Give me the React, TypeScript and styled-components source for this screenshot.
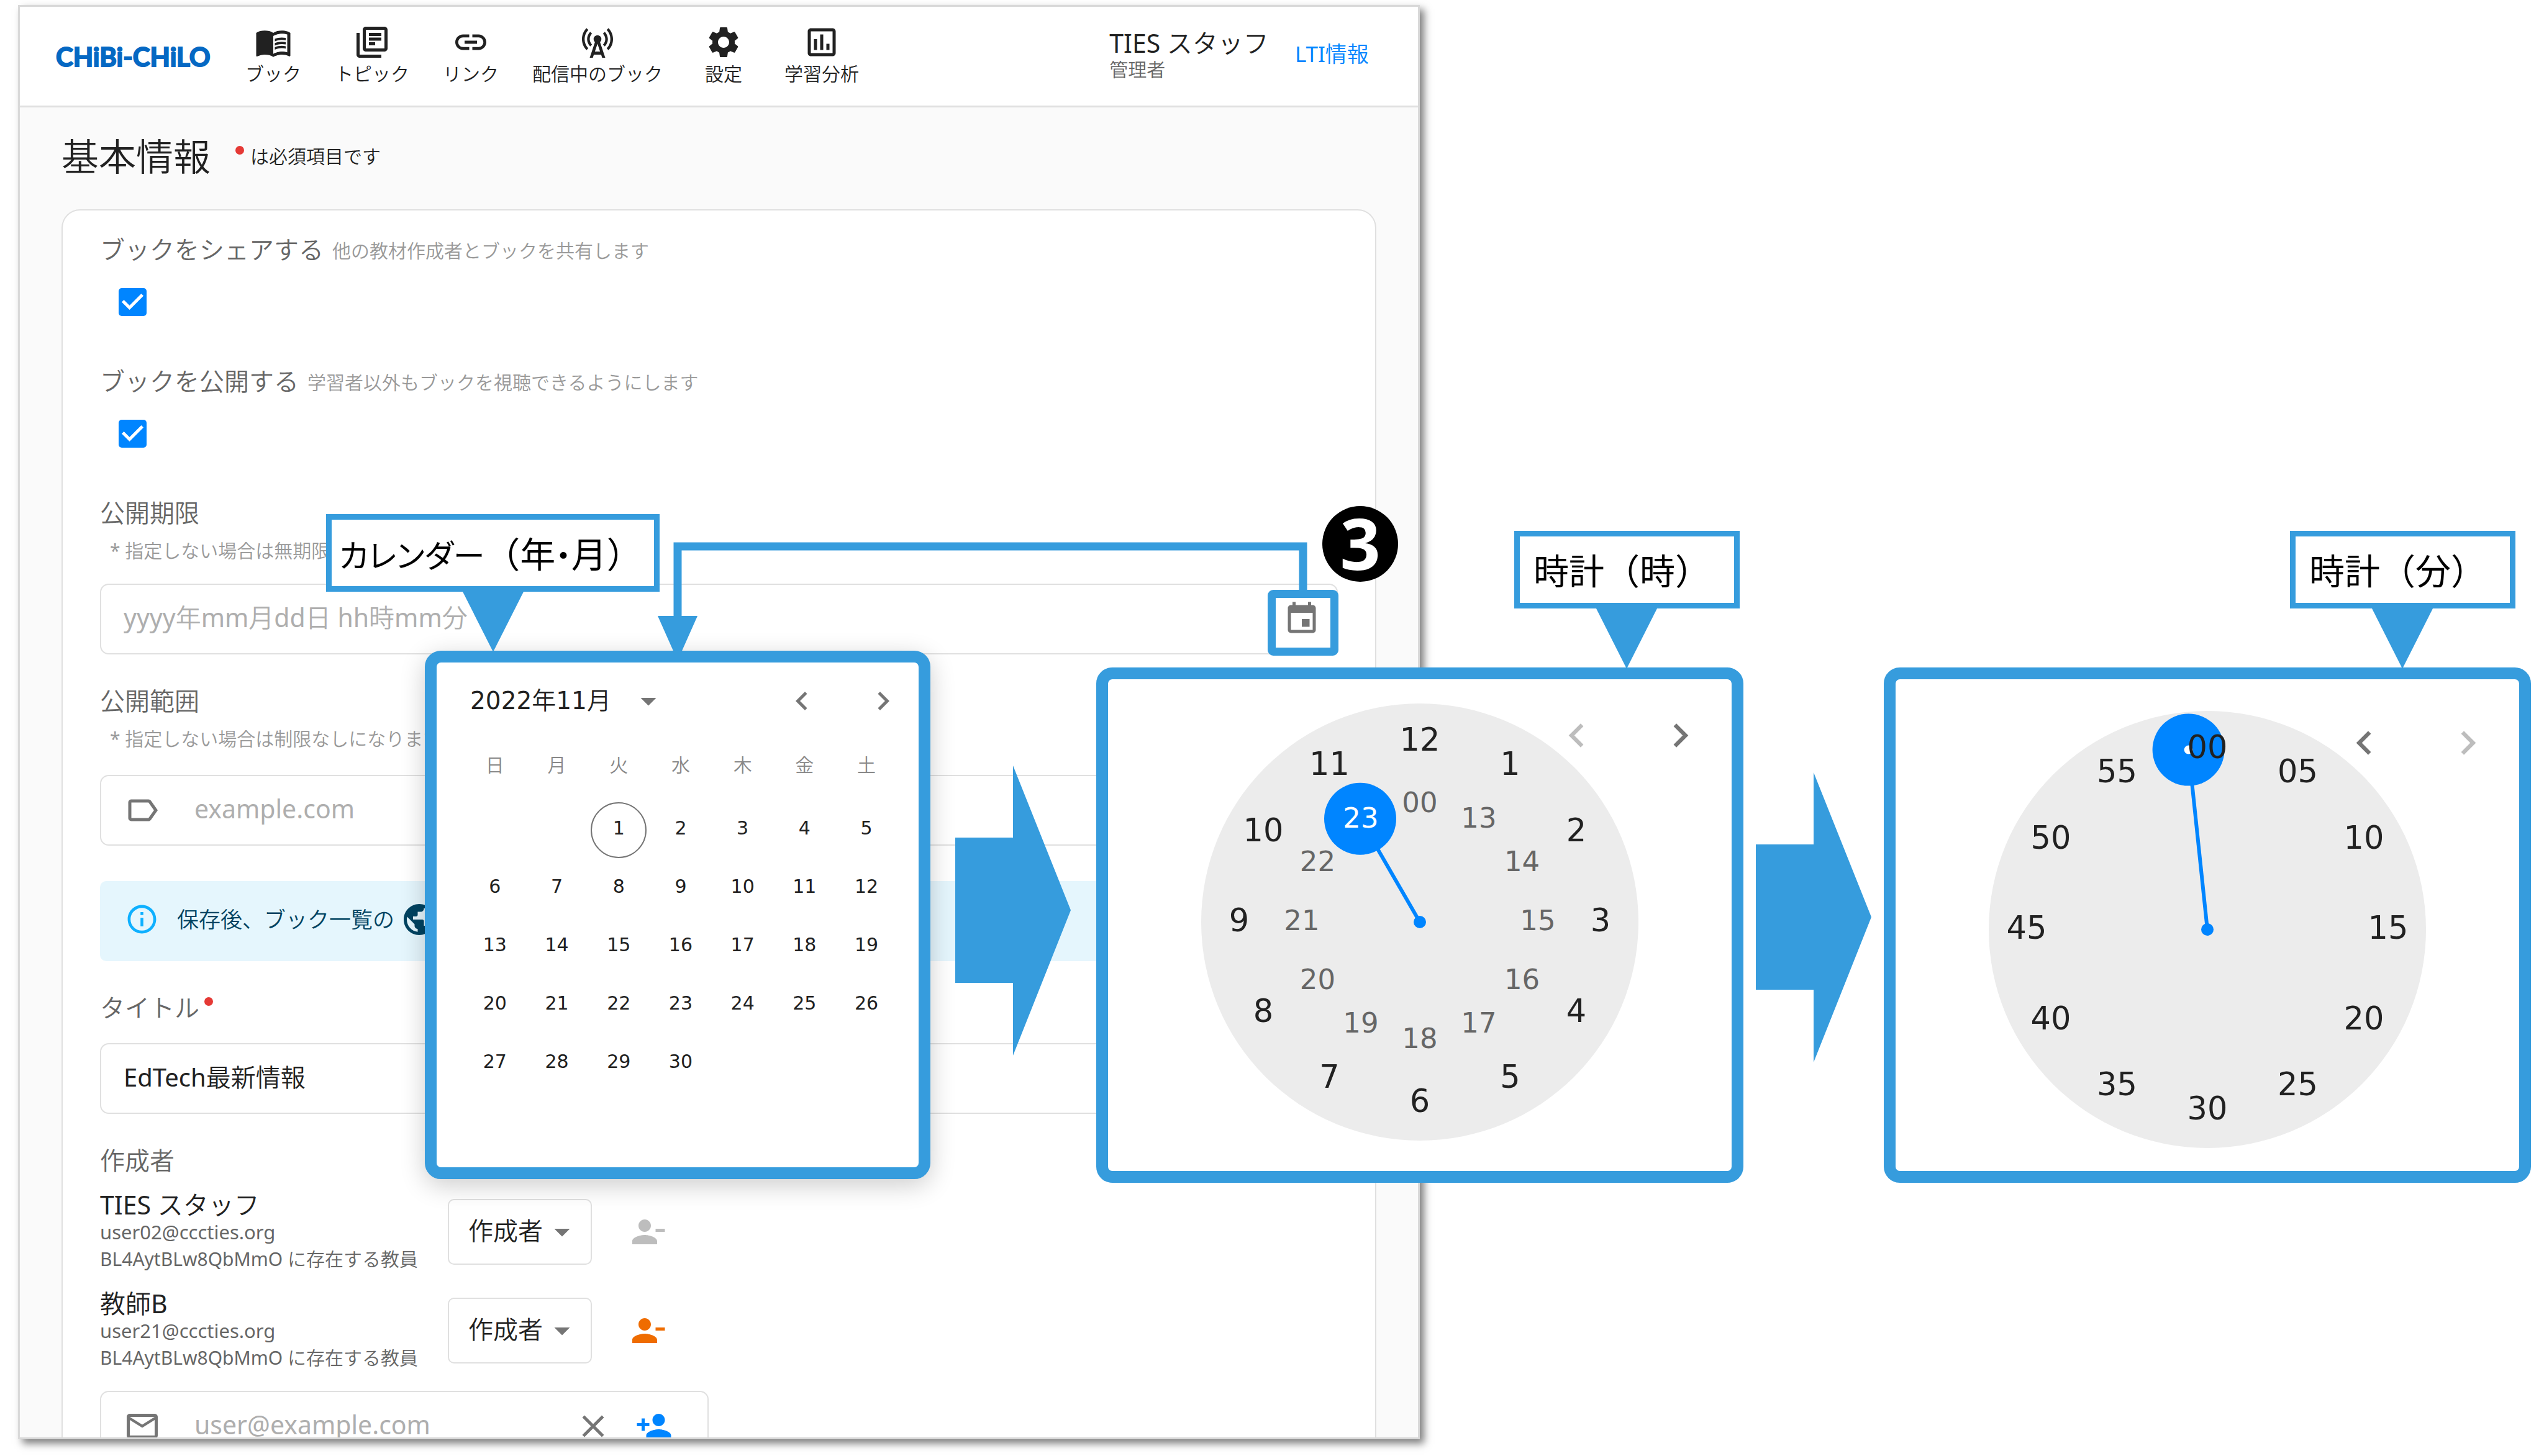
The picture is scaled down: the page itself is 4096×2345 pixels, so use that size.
import React from "react";
import styled, { createGlobalStyle, css } from "styled-components";
import {
  MdArrowDropDown,
  MdCellTower,
  MdChevronLeft,
  MdChevronRight,
  MdClose,
  MdEvent,
  MdInfoOutline,
  MdLabelOutline,
  MdLink,
  MdMailOutline,
  MdMenuBook,
  MdOutlineAssessment,
  MdOutlineLibraryBooks,
  MdPersonAdd,
  MdPersonRemove,
  MdPublic,
  MdSettings,
} from "react-icons/md";

const color = {
  annotation: "#369cdd",
  primary: "#0085ff",
  text: "#212121",
  muted: "#666666",
  faint: "#999999",
  placeholder: "#aeaeae",
  line: "#e0e0e0",
  icon: "#757575",
  danger: "#e53935",
};

const digits = `"DejaVu Sans", sans-serif`;

const GlobalStyle = createGlobalStyle`
  *, *::before, *::after { box-sizing: border-box; }
  body {
    margin: 0;
    background: #fff;
    color: ${color.text};
    font-family: "Noto Sans", "Noto Sans CJK JP DemiLight", "Noto Sans CJK JP", sans-serif;
    font-size: 40px;
    line-height: 60px;
  }
  button, input, select { font: inherit; color: inherit; margin: 0; padding: 0; border: 0; background: none; }
  h1, p { margin: 0; font-weight: inherit; }
  svg { display: block; flex: none; }
`;

const Stage = styled.main`
  position: relative;
  height: 100vh;
  padding: 8px 0 27px 29px;
  overflow: hidden;
`;

/* ---------- application window ---------- */

const Window = styled.section`
  width: calc(55% + 20px);
  height: 100%;
  overflow: hidden;
  border: 3px solid #d9d9d9;
  background: #fafafa;
  box-shadow: 7px 7px 12px rgba(0, 0, 0, 0.5);
`;

const Header = styled.header`
  display: flex;
  align-items: center;
  height: 162px;
  padding: 0 79px 4px 58px;
  border-bottom: 3px solid ${color.line};
  background: #fff;
`;

const Logo = styled.a`
  width: 305px;
  padding-top: 4px;
  color: #0568c3;
  font-family: Lato, sans-serif;
  font-size: 42px;
  font-weight: 700;
  text-decoration: none;
  white-space: nowrap;
  -webkit-text-stroke: 2px #0568c3;
`;

const Nav = styled.nav`
  display: flex;
  gap: 54px;
`;

const NavItem = styled.a`
  display: flex;
  flex-direction: column;
  align-items: center;
  min-width: 88px;
  color: inherit;
  font-size: 30px;
  line-height: 42px;
  text-decoration: none;
  white-space: nowrap;
`;

const Account = styled.div`
  display: flex;
  align-items: center;
  gap: 42px;
  margin-left: auto;
  padding-bottom: 4px;
  white-space: nowrap;
`;

const AccountName = styled.div`
  font-size: 41px;
  line-height: 50px;
`;

const AccountRole = styled.div`
  color: ${color.muted};
  font-size: 30px;
  line-height: 36px;
`;

const LtiLink = styled.a`
  color: ${color.primary};
  font-size: 35px;
  text-decoration: none;
`;

const Body = styled.div`
  padding: 37px 67px 0 67px;
`;

const Heading = styled.div`
  display: flex;
  align-items: center;
  gap: 40px;
  margin-bottom: 43px;
  line-height: 84px;
`;

const Title = styled.h1`
  font-size: 60px;
  font-weight: 300;
`;

const RequiredNote = styled.p`
  display: flex;
  align-items: center;
  gap: 10px;
  font-size: 30px;
`;

const RequiredDot = styled.span`
  width: 14px;
  height: 14px;
  margin-bottom: 20px;
  border-radius: 50%;
  background: ${color.danger};
`;

const Card = styled.form`
  padding: 33px 60px 120px;
  border: 2px solid ${color.line};
  border-radius: 30px;
  background: #fff;
`;

const Field = styled.div<{ $after?: number }>`
  margin-bottom: ${(p) => p.$after ?? 45}px;
`;

const Label = styled.label<{ $gap?: number }>`
  display: flex;
  align-items: center;
  gap: ${(p) => p.$gap ?? 14}px;
  width: fit-content;
  height: 60px;
  color: ${color.muted};
  white-space: nowrap;
`;

const Hint = styled.span`
  padding-top: 4px;
  color: ${color.faint};
  font-size: 30px;
`;

const HelpText = styled.p`
  margin-top: 9px;
  padding-left: 16px;
  color: ${color.faint};
  font-size: 30px;
  line-height: 44px;
  white-space: nowrap;
`;

const CheckBox = styled.input`
  display: block;
  appearance: none;
  width: 45px;
  height: 45px;
  margin: 32px 0 0 30px;
  border-radius: 5px;
  background: ${color.primary};

  &::after {
    content: "";
    display: block;
    height: 100%;
    background: #fff;
    clip-path: polygon(39% 78%, 11% 50%, 19% 42%, 39% 62%, 81% 20%, 89% 28%);
  }
`;

const InputBox = styled.div<{ $gap: number; $width?: string }>`
  display: flex;
  align-items: center;
  width: ${(p) => p.$width ?? "100%"};
  height: 114px;
  margin-top: ${(p) => p.$gap}px;
  padding: 0 26px 0 36px;
  border: 2px solid ${color.line};
  border-radius: 14px;
  background: #fff;
  color: ${color.icon};
`;

const TextInput = styled.input<{ $indent?: boolean }>`
  flex: 1;
  min-width: 0;
  margin-left: ${(p) => (p.$indent ? 54 : 0)}px;
  padding-bottom: 4px;
  color: ${color.text};
  outline: none;

  &::placeholder {
    color: ${color.placeholder};
    font-size: 41px;
    opacity: 1;
  }
`;

const IconButton = styled.button<{ $color?: string }>`
  display: flex;
  flex: none;
  color: ${(p) => p.$color ?? color.icon};
`;

const Notice = styled.div`
  display: flex;
  align-items: center;
  height: 129px;
  margin-bottom: 45px;
  padding: 0 40px 6px;
  border-radius: 10px;
  background: #e5f6fd;
  color: #014361;
  font-size: 35px;
`;

const NoticeText = styled.span`
  margin: 0 10px 0 29px;
`;

const Author = styled.div`
  display: grid;
  grid-template-columns: 560px 232px auto;
  justify-content: start;
  align-items: center;
  margin-top: 19px;

  & + & {
    margin-top: 27px;
  }
`;

const AuthorName = styled.div`
  font-size: 41px;
  line-height: 44px;
`;

const AuthorDetail = styled.div`
  color: ${color.muted};
  font-size: 30px;
  line-height: 44px;
  white-space: nowrap;
`;

const AuthorMail = styled(AuthorDetail)`
  font-size: 31px;
`;

const SelectBox = styled.div`
  display: grid;
  align-items: center;
  height: 106px;
  border: 2px solid ${color.line};
  border-radius: 10px;
  color: ${color.icon};

  & > * {
    grid-area: 1 / 1;
  }

  & > svg {
    justify-self: end;
    margin-right: 16px;
    pointer-events: none;
  }
`;

const Select = styled.select`
  appearance: none;
  height: 100%;
  padding: 0 31px 4px;
  color: ${color.text};
`;

const RemoveButton = styled(IconButton)`
  margin-left: 60px;
`;

const AddButton = styled(IconButton)`
  margin: 0 30px 0 38px;
`;

/* ---------- annotations drawn over the window ---------- */

const frame = css`
  border: 19px solid ${color.annotation};
  border-radius: 26px;
  background: #fff;
`;

const Callout = styled.div<{ $left: number; $width: number; $tail: number; $pad?: number }>`
  position: absolute;
  top: -220px;
  left: ${(p) => p.$left}px;
  width: ${(p) => p.$width}px;
  height: 125px;
  padding-left: ${(p) => p.$pad ?? 22}px;
  border: 9px solid ${color.annotation};
  background: #fff;
  color: #000;
  font-family: "Noto Sans CJK JP", sans-serif;
  font-size: 57px;
  font-weight: 400;
  line-height: 104px;
  white-space: nowrap;

  &::after {
    content: "";
    position: absolute;
    top: 116px;
    left: ${(p) => p.$tail}px;
    width: 98px;
    height: 97px;
    background: ${color.annotation};
    clip-path: polygon(0 0, 100% 0, 50% 100%);
  }
`;

const Kana = styled.span`
  font-feature-settings: "palt";
  font-size: 51px;
`;

const CalendarAnchor = styled.div`
  position: absolute;
  top: 1048px;
  left: 684px;
  width: 814px;
`;

const CalendarCard = styled.div`
  ${frame}
  height: 851px;
  padding: 15px 34px 0 44px;
  box-shadow: 0 10px 40px rgba(0, 0, 0, 0.2);
`;

const CalendarHeader = styled.div`
  display: flex;
  align-items: center;
  height: 94px;
  margin-right: -7px;
  padding-left: 10px;
`;

const MonthButton = styled.button`
  display: flex;
  align-items: center;
  gap: 30px;
  margin-right: auto;
  font-family: "DejaVu Sans", "Noto Sans CJK JP DemiLight", "Noto Sans CJK JP", sans-serif;
  font-size: 39px;
  white-space: nowrap;

  & > svg {
    color: ${color.icon};
  }
`;

const MonthArrow = styled(IconButton)`
  margin-left: 71px;
`;

const Days = styled.table`
  width: 100%;
  table-layout: fixed;
  border-collapse: collapse;
  text-align: center;

  th {
    height: 114px;
    padding: 0 0 2px;
    color: #888;
    font-size: 30px;
    font-weight: 400;
  }

  td {
    height: 94px;
    padding: 0;
  }
`;

const Day = styled.button<{ $today?: boolean }>`
  width: 90px;
  height: 90px;
  padding-bottom: 6px;
  border: 2px solid ${(p) => (p.$today ? color.icon : "transparent")};
  border-radius: 50%;
  font-family: ${digits};
  font-size: 30px;
  line-height: 40px;
  vertical-align: middle;
`;

const EventHighlight = styled.div`
  position: absolute;
  top: 950px;
  left: 2041px;
  width: 114px;
  height: 106px;
  border: 13px solid ${color.annotation};
  border-radius: 9px;
`;

const Connector = styled.svg`
  position: absolute;
  top: 873px;
  left: 1059px;
`;

const StepBadge = styled.div`
  position: absolute;
  top: 815px;
  left: 2129px;
  width: 122px;
  height: 122px;
  border-radius: 50%;
  background: #000;
  color: #fff;
  font-size: 114px;
  font-weight: 700;
  line-height: 118px;
  text-align: center;
`;

const ClockRow = styled.div`
  position: absolute;
  top: 1075px;
  right: 21px;
  display: flex;
  gap: 20px;
`;

const BlockArrow = styled.svg<{ $first?: boolean }>`
  margin: ${(p) => (p.$first ? "158px 21px 0 0" : "169px 0 0")};
`;

const ClockAnchor = styled.div`
  position: relative;
  width: 1042px;
`;

const ClockCard = styled.div<{ $top: number }>`
  ${frame}
  position: relative;
  display: flex;
  justify-content: center;
  height: 830px;
  padding-top: ${(p) => p.$top}px;
`;

const ClockArrows = styled.div<{ $top: number }>`
  position: absolute;
  top: ${(p) => p.$top + 13}px;
  right: 44px;
  display: flex;
  gap: 90px;
`;

const Face = styled.div`
  position: relative;
  width: 704px;
  height: 704px;
  border-radius: 50%;
  background: #ececec;
`;

const Hand = styled.svg`
  position: absolute;
  inset: 0;
`;

const ClockNumber = styled.span<{ $inner?: boolean; $selected?: boolean }>`
  position: absolute;
  width: 100px;
  margin: -32px 0 0 -50px;
  color: ${(p) => (p.$selected ? "#fff" : p.$inner ? color.muted : color.text)};
  font-family: ${digits};
  font-size: ${(p) => (p.$inner ? 45 : 51)}px;
  text-align: center;
`;

const navItems = [
  { label: "ブック", Icon: MdMenuBook },
  { label: "トピック", Icon: MdOutlineLibraryBooks },
  { label: "リンク", Icon: MdLink },
  { label: "配信中のブック", Icon: MdCellTower },
  { label: "設定", Icon: MdSettings },
  { label: "学習分析", Icon: MdOutlineAssessment },
];

const authors = [
  { name: "TIES スタッフ", mail: "user02@cccties.org", icon: "#bdbdbd" },
  { name: "教師B", mail: "user21@cccties.org", icon: "#ef6c00" },
];

const weekdays = ["日", "月", "火", "水", "木", "金", "土"];
const weeks = Array.from({ length: 5 }, (_, w) =>
  Array.from({ length: 7 }, (_, d) => w * 7 + d - 1).map((n) => (n >= 1 && n <= 30 ? n : null)),
);

const pad = (n: number) => String(n).padStart(2, "0");
const hours = Array.from({ length: 12 }, (_, i) => String(i === 0 ? 12 : i));
const lateHours = Array.from({ length: 12 }, (_, i) => (i === 0 ? "00" : String(i + 12)));
const minutes = Array.from({ length: 12 }, (_, i) => pad(i * 5));

const CENTER = 352;
const OUTER = 291;
const INNER = 190;

const onFace = (turn: number, radius: number) => ({
  x: CENTER + Math.sin(turn * 2 * Math.PI) * radius,
  y: CENTER - Math.cos(turn * 2 * Math.PI) * radius,
});

function Numbers({ values, radius, inner, selected }: { values: string[]; radius: number; inner?: boolean; selected?: string }) {
  return (
    <>
      {values.map((value, i) => {
        const { x, y } = onFace(i / 12, radius);
        return (
          <ClockNumber key={value} $inner={inner} $selected={value === selected} style={{ left: x, top: y }}>
            {value}
          </ClockNumber>
        );
      })}
    </>
  );
}

function ClockHand({ turn, radius, pin }: { turn: number; radius: number; pin?: boolean }) {
  const { x, y } = onFace(turn, radius);
  return (
    <Hand width="704" height="704" viewBox="0 0 704 704" fill={color.primary}>
      <line x1={CENTER} y1={CENTER} x2={x} y2={y} stroke={color.primary} strokeWidth="6" />
      <circle cx={CENTER} cy={CENTER} r="10" />
      <circle cx={x} cy={y} r="58" />
      {pin && <circle cx={x} cy={y} r="7" fill="#fff" />}
    </Hand>
  );
}

function Arrow({ first }: { first?: boolean }) {
  return (
    <BlockArrow $first={first} width="186" height="467" viewBox="0 0 186 467" fill={color.annotation}>
      <path d="M0 116H93V0L186 233 93 467V350H0Z" />
    </BlockArrow>
  );
}

function AppWindow() {
  return (
    <Window>
      <Header>
        <Logo href="#">CHiBi-CHiLO</Logo>
        <Nav>
          {navItems.map(({ label, Icon }) => (
            <NavItem key={label} href="#">
              <Icon size={60} />
              {label}
            </NavItem>
          ))}
        </Nav>
        <Account>
          <div>
            <AccountName>TIES スタッフ</AccountName>
            <AccountRole>管理者</AccountRole>
          </div>
          <LtiLink href="#">LTI情報</LtiLink>
        </Account>
      </Header>
      <Body>
        <Heading>
          <Title>基本情報</Title>
          <RequiredNote>
            <RequiredDot />
            は必須項目です
          </RequiredNote>
        </Heading>
        <Card>
          <Field $after={75}>
            <Label htmlFor="shared">
              ブックをシェアする<Hint>他の教材作成者とブックを共有します</Hint>
            </Label>
            <CheckBox id="shared" type="checkbox" defaultChecked />
          </Field>
          <Field $after={75}>
            <Label htmlFor="public">
              ブックを公開する<Hint>学習者以外もブックを視聴できるようにします</Hint>
            </Label>
            <CheckBox id="public" type="checkbox" defaultChecked />
          </Field>
          <Field>
            <Label htmlFor="expires">公開期限</Label>
            <HelpText>* 指定しない場合は無期限</HelpText>
            <InputBox $gap={31}>
              <TextInput id="expires" placeholder="yyyy年mm月dd日 hh時mm分" />
              <IconButton type="button" aria-label="日時を選択">
                <MdEvent size={60} />
              </IconButton>
            </InputBox>
          </Field>
          <Field $after={57}>
            <Label htmlFor="domains">公開範囲</Label>
            <HelpText>* 指定しない場合は制限なしになります</HelpText>
            <InputBox $gap={36}>
              <MdLabelOutline size={60} />
              <TextInput id="domains" $indent placeholder="example.com" />
            </InputBox>
          </Field>
          <Notice>
            <MdInfoOutline size={55} color="#0eb0ff" />
            <NoticeText>保存後、ブック一覧の</NoticeText>
            <MdPublic size={60} />
          </Notice>
          <Field>
            <Label htmlFor="title" $gap={8}>
              タイトル
              <RequiredDot />
            </Label>
            <InputBox $gap={27}>
              <TextInput id="title" defaultValue="EdTech最新情報" />
            </InputBox>
          </Field>
          <Field>
            <Label as="div">作成者</Label>
            {authors.map(({ name, mail, icon }) => (
              <Author key={name}>
                <div>
                  <AuthorName>{name}</AuthorName>
                  <AuthorMail>{mail}</AuthorMail>
                  <AuthorDetail>BL4AytBLw8QbMmO に存在する教員</AuthorDetail>
                </div>
                <SelectBox>
                  <Select aria-label={`${name}の役割`}>
                    <option>作成者</option>
                  </Select>
                  <MdArrowDropDown size={60} />
                </SelectBox>
                <RemoveButton type="button" aria-label="削除" $color={icon}>
                  <MdPersonRemove size={60} />
                </RemoveButton>
              </Author>
            ))}
            <InputBox $gap={31} $width="980px">
              <MdMailOutline size={60} />
              <TextInput $indent aria-label="メールアドレス" placeholder="user@example.com" />
              <IconButton type="button" aria-label="クリア">
                <MdClose size={60} />
              </IconButton>
              <AddButton type="button" aria-label="追加" $color={color.primary}>
                <MdPersonAdd size={60} />
              </AddButton>
            </InputBox>
          </Field>
        </Card>
      </Body>
    </Window>
  );
}

function Calendar() {
  return (
    <CalendarAnchor>
      <CalendarCard>
        <CalendarHeader>
          <MonthButton>
            2022年11月
            <MdArrowDropDown size={60} />
          </MonthButton>
          <MonthArrow aria-label="前の月">
            <MdChevronLeft size={60} />
          </MonthArrow>
          <MonthArrow aria-label="次の月">
            <MdChevronRight size={60} />
          </MonthArrow>
        </CalendarHeader>
        <Days>
          <thead>
            <tr>
              {weekdays.map((d) => (
                <th key={d}>{d}</th>
              ))}
            </tr>
          </thead>
          <tbody>
            {weeks.map((week, i) => (
              <tr key={i}>
                {week.map((n, j) => (
                  <td key={j}>{n && <Day $today={n === 1}>{n}</Day>}</td>
                ))}
              </tr>
            ))}
          </tbody>
        </Days>
      </CalendarCard>
      <Callout $left={-159} $width={537} $tail={211} $pad={12}>
        <Kana>カレンダー</Kana>（年<Kana>・</Kana>月）
      </Callout>
    </CalendarAnchor>
  );
}

function Clock({ title, top, back, children }: { title: string; top: number; back: boolean; children: React.ReactNode }) {
  const on = color.icon;
  const off = "#bdbdbd";
  return (
    <ClockAnchor>
      <ClockCard $top={top}>
        <Face>{children}</Face>
        <ClockArrows $top={top}>
          <IconButton aria-label="戻る" $color={back ? on : off}>
            <MdChevronLeft size={77} />
          </IconButton>
          <IconButton aria-label="進む" $color={back ? off : on}>
            <MdChevronRight size={77} />
          </IconButton>
        </ClockArrows>
      </ClockCard>
      <Callout $left={back ? 654 : 673} $width={363} $tail={123}>
        {title}
      </Callout>
    </ClockAnchor>
  );
}

export default function App() {
  return (
    <>
      <GlobalStyle />
      <Stage>
        <AppWindow />
        <EventHighlight />
        <StepBadge>3</StepBadge>
        <Calendar />
        <Connector width="1046" height="182" viewBox="0 0 1046 182">
          <path d="M32 125V7H1039V78" fill="none" stroke={color.annotation} strokeWidth="13" />
          <path d="M0 119H64L36 182H28Z" fill={color.annotation} />
        </Connector>
        <ClockRow>
          <Arrow first />
          <Clock title="時計（時）" top={39} back={false}>
            <ClockHand turn={11 / 12} radius={192} />
            <Numbers values={hours} radius={OUTER} />
            <Numbers values={lateHours} radius={INNER} inner selected="23" />
          </Clock>
          <Arrow />
          <Clock title="時計（分）" top={51} back>
            <ClockHand turn={59 / 60} radius={OUTER} pin />
            <Numbers values={minutes} radius={OUTER} />
          </Clock>
        </ClockRow>
      </Stage>
    </>
  );
}
